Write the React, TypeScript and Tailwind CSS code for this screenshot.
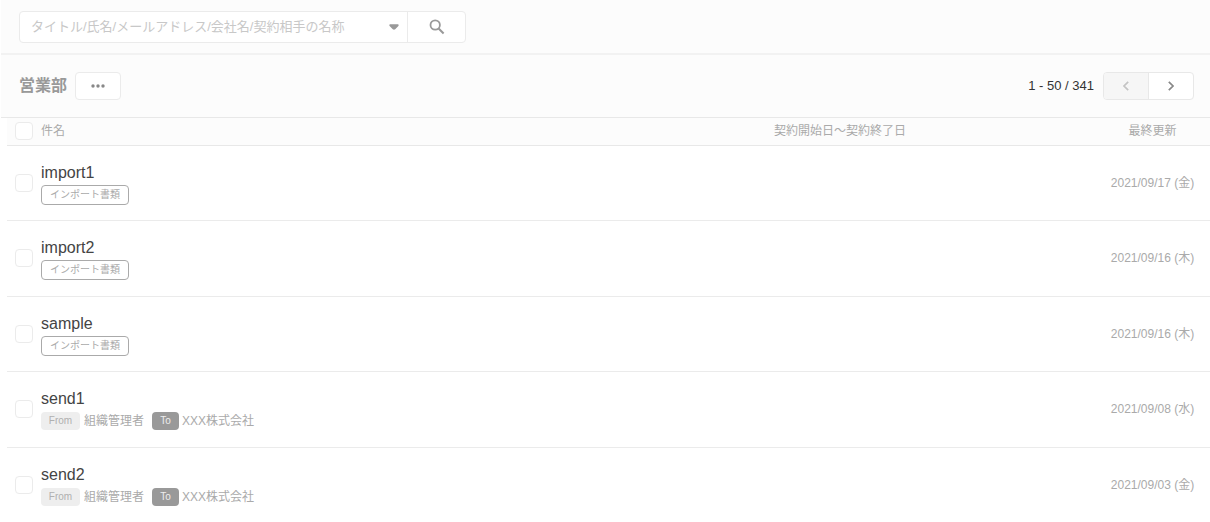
const documents = [
  { name: 'import1', date: '2021/09/17 (金)', imported: true },
  { name: 'import2', date: '2021/09/16 (木)', imported: true },
  { name: 'sample', date: '2021/09/16 (木)', imported: true },
  { name: 'send1', date: '2021/09/08 (水)', imported: false },
  { name: 'send2', date: '2021/09/03 (金)', imported: false },
];

function Checkbox({ label }: { label: string }) {
  return (
    <input
      type="checkbox"
      aria-label={label}
      className="block h-[18px] w-[18px] appearance-none rounded border border-[#ebebeb] bg-white checked:bg-[#999]"
    />
  );
}

function SearchBar() {
  return (
    <form className="flex border-b-2 border-[#f2f2f2] bg-[#fcfcfc] px-[18px] pt-[11px] pb-2.5">
      <div className="flex h-8 w-full max-w-[447px] rounded border border-[#ebebeb] bg-white">
        <input
          type="text"
          aria-label="書類を検索"
          placeholder="タイトル/氏名/メールアドレス/会社名/契約相手の名称"
          className="min-w-0 flex-1 bg-transparent pl-[11px] text-[13px] text-[#555] outline-none placeholder:text-[#c8c8c8]"
        />
        <button type="button" aria-label="検索条件" className="flex w-[26px] items-center justify-center">
          <svg width="10" height="6" viewBox="0 0 10 6" fill="#999">
            <path d="M1.2.3h7.6c.9 0 1.2 1 .6 1.6L6.2 5.2c-.7.6-1.7.6-2.4 0L.6 1.9C0 1.3.3.3 1.2.3z" />
          </svg>
        </button>
        <button
          type="submit"
          aria-label="検索"
          className="flex w-[58px] items-center justify-center border-l border-[#ebebeb]"
        >
          <svg width="16" height="16" viewBox="0 0 16 16" fill="none" stroke="#999" strokeWidth="1.8">
            <circle cx="6.2" cy="6" r="4.7" />
            <path d="M9.6 9.4l5 5" strokeWidth="2.1" />
          </svg>
        </button>
      </div>
    </form>
  );
}

function TitleBar() {
  return (
    <div className="flex items-center justify-between border-b border-[#e8e8e8] bg-[#fcfcfc] py-[17px] pr-4 pl-[18px]">
      <div className="flex items-center gap-2">
        <h1 className="text-base leading-7 font-bold text-[#999]">営業部</h1>
        <button
          type="button"
          aria-label="メニュー"
          className="flex h-7 w-[46px] items-center justify-center rounded border border-[#ebebeb] bg-white"
        >
          <svg width="14" height="4" viewBox="0 0 14 4" fill="#888">
            <circle cx="2" cy="2" r="1.7" />
            <circle cx="7" cy="2" r="1.7" />
            <circle cx="12" cy="2" r="1.7" />
          </svg>
        </button>
      </div>

      <nav className="flex items-center gap-[9px]" aria-label="ページ">
        <span className="text-[13px] text-[#333]">1 - 50 / 341</span>
        <div className="flex h-7 w-[91px] overflow-hidden rounded border border-[#e8e8e8] bg-white">
          <button
            type="button"
            disabled
            aria-label="前へ"
            className="flex flex-1 items-center justify-center border-r border-[#e8e8e8] bg-[#f6f6f6]"
          >
            <svg width="6" height="10" viewBox="0 0 6 10" fill="none" stroke="#c4c4c4" strokeWidth="1.7">
              <path d="M5.2.8L1 5l4.2 4.2" />
            </svg>
          </button>
          <button type="button" aria-label="次へ" className="flex flex-1 items-center justify-center">
            <svg width="6" height="10" viewBox="0 0 6 10" fill="none" stroke="#888" strokeWidth="1.7">
              <path d="M.8.8L5 5 .8 9.2" />
            </svg>
          </button>
        </div>
      </nav>
    </div>
  );
}

function Parties() {
  return (
    <div className="flex h-5 items-center text-xs text-[#aaa]">
      <span className="flex h-[18px] w-[39px] items-center justify-center rounded-sm bg-[#eee] text-[10px] text-[#b0b0b0]">
        From
      </span>
      <span className="ml-1">組織管理者</span>
      <span className="ml-2 flex h-[18px] w-[27px] items-center justify-center rounded-sm bg-[#999] text-[10px] text-[#eee]">
        To
      </span>
      <span className="ml-[3px]">XXX株式会社</span>
    </div>
  );
}

export default function App() {
  return (
    <main className="bg-white pl-px font-['Liberation_Sans','Noto_Sans_CJK_JP',sans-serif]" lang="ja">
      <SearchBar />
      <TitleBar />

      <div className="pl-1.5">
        <table className="w-full table-fixed border-collapse text-xs text-[#aaa]">
          <thead>
            <tr className="h-[27px] border-b border-[#e8e8e8] bg-[#fcfcfc] text-left">
              <th className="w-[34px] pl-2">
                <Checkbox label="すべて選択" />
              </th>
              <th className="font-normal">件名</th>
              <th className="w-[321px] font-normal">契約開始日〜契約終了日</th>
              <th className="w-[115px] text-center font-normal">最終更新</th>
            </tr>
          </thead>
          <tbody>
            {documents.map((doc) => (
              <tr key={doc.name} className="h-[75px] border-b border-[#ebebeb] last:border-b-0 even:h-[76px]">
                <td className="pl-2">
                  <Checkbox label={doc.name} />
                </td>
                <td>
                  <a href="#" className="block text-base leading-6 text-[#444]">
                    {doc.name}
                  </a>
                  {doc.imported ? (
                    <span className="flex h-5 w-[88px] items-center justify-center rounded-sm border border-[#aaa] text-[10px]">
                      インポート書類
                    </span>
                  ) : (
                    <Parties />
                  )}
                </td>
                <td />
                <td className="text-center">{doc.date}</td>
              </tr>
            ))}
          </tbody>
        </table>
      </div>
    </main>
  );
}
